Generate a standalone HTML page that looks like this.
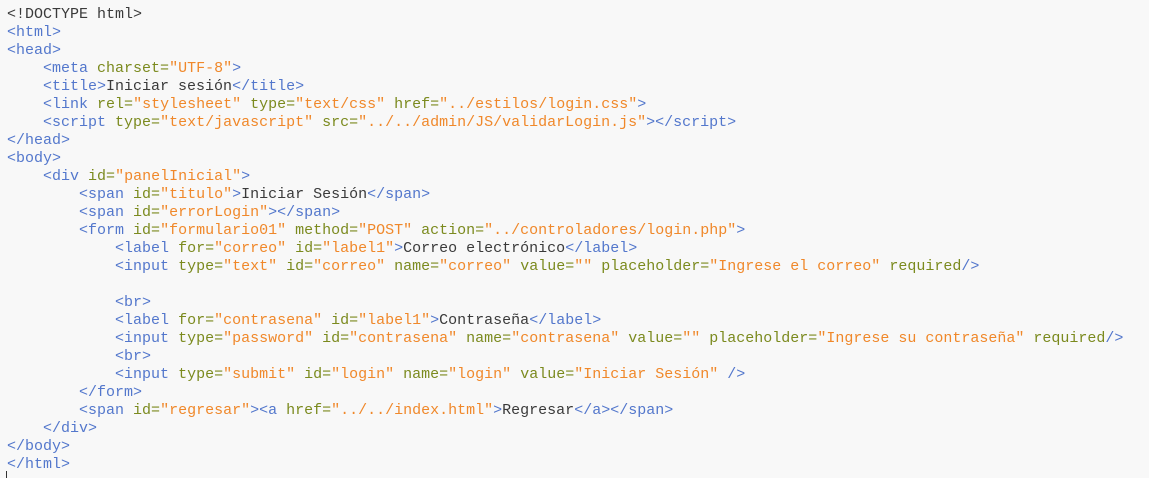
<!DOCTYPE html>
<html><head><meta charset="UTF-8"><style>
html,body{margin:0;padding:0;background:#f8f8f8;width:1149px;height:478px;overflow:hidden}
pre{margin:0;padding:6px 0 0 7px;font-family:"Liberation Mono",monospace;font-size:15px;line-height:18px;color:#3a3a3a}
.t{color:#5377cc}.a{color:#7b8a1e}.s{color:#f0882a}
</style></head><body><pre>&lt;!DOCTYPE html&gt;
<span class="t">&lt;html&gt;</span>
<span class="t">&lt;head&gt;</span>
    <span class="t">&lt;meta</span> <span class="a">charset=</span><span class="s">"UTF-8"</span><span class="t">&gt;</span>
    <span class="t">&lt;title&gt;</span>Iniciar sesión<span class="t">&lt;/title&gt;</span>
    <span class="t">&lt;link</span> <span class="a">rel=</span><span class="s">"stylesheet"</span> <span class="a">type=</span><span class="s">"text/css"</span> <span class="a">href=</span><span class="s">"../estilos/login.css"</span><span class="t">&gt;</span>
    <span class="t">&lt;script</span> <span class="a">type=</span><span class="s">"text/javascript"</span> <span class="a">src=</span><span class="s">"../../admin/JS/validarLogin.js"</span><span class="t">&gt;&lt;/script&gt;</span>
<span class="t">&lt;/head&gt;</span>
<span class="t">&lt;body&gt;</span>
    <span class="t">&lt;div</span> <span class="a">id=</span><span class="s">"panelInicial"</span><span class="t">&gt;</span>
        <span class="t">&lt;span</span> <span class="a">id=</span><span class="s">"titulo"</span><span class="t">&gt;</span>Iniciar Sesión<span class="t">&lt;/span&gt;</span>
        <span class="t">&lt;span</span> <span class="a">id=</span><span class="s">"errorLogin"</span><span class="t">&gt;&lt;/span&gt;</span>
        <span class="t">&lt;form</span> <span class="a">id=</span><span class="s">"formulario01"</span> <span class="a">method=</span><span class="s">"POST"</span> <span class="a">action=</span><span class="s">"../controladores/login.php"</span><span class="t">&gt;</span>
            <span class="t">&lt;label</span> <span class="a">for=</span><span class="s">"correo"</span> <span class="a">id=</span><span class="s">"label1"</span><span class="t">&gt;</span>Correo electrónico<span class="t">&lt;/label&gt;</span>
            <span class="t">&lt;input</span> <span class="a">type=</span><span class="s">"text"</span> <span class="a">id=</span><span class="s">"correo"</span> <span class="a">name=</span><span class="s">"correo"</span> <span class="a">value=</span><span class="s">""</span> <span class="a">placeholder=</span><span class="s">"Ingrese el correo"</span> <span class="a">required</span><span class="t">/&gt;</span>

            <span class="t">&lt;br&gt;</span>
            <span class="t">&lt;label</span> <span class="a">for=</span><span class="s">"contrasena"</span> <span class="a">id=</span><span class="s">"label1"</span><span class="t">&gt;</span>Contraseña<span class="t">&lt;/label&gt;</span>
            <span class="t">&lt;input</span> <span class="a">type=</span><span class="s">"password"</span> <span class="a">id=</span><span class="s">"contrasena"</span> <span class="a">name=</span><span class="s">"contrasena"</span> <span class="a">value=</span><span class="s">""</span> <span class="a">placeholder=</span><span class="s">"Ingrese su contraseña"</span> <span class="a">required</span><span class="t">/&gt;</span>
            <span class="t">&lt;br&gt;</span>
            <span class="t">&lt;input</span> <span class="a">type=</span><span class="s">"submit"</span> <span class="a">id=</span><span class="s">"login"</span> <span class="a">name=</span><span class="s">"login"</span> <span class="a">value=</span><span class="s">"Iniciar Sesión"</span> <span class="t">/&gt;</span>
        <span class="t">&lt;/form&gt;</span>
        <span class="t">&lt;span</span> <span class="a">id=</span><span class="s">"regresar"</span><span class="t">&gt;&lt;a</span> <span class="a">href=</span><span class="s">"../../index.html"</span><span class="t">&gt;</span>Regresar<span class="t">&lt;/a&gt;&lt;/span&gt;</span>
    <span class="t">&lt;/div&gt;</span>
<span class="t">&lt;/body&gt;</span>
<span class="t">&lt;/html&gt;</span></pre>
<div style="position:absolute;left:6px;top:471px;width:1px;height:7px;background:#333"></div>
</body></html>
